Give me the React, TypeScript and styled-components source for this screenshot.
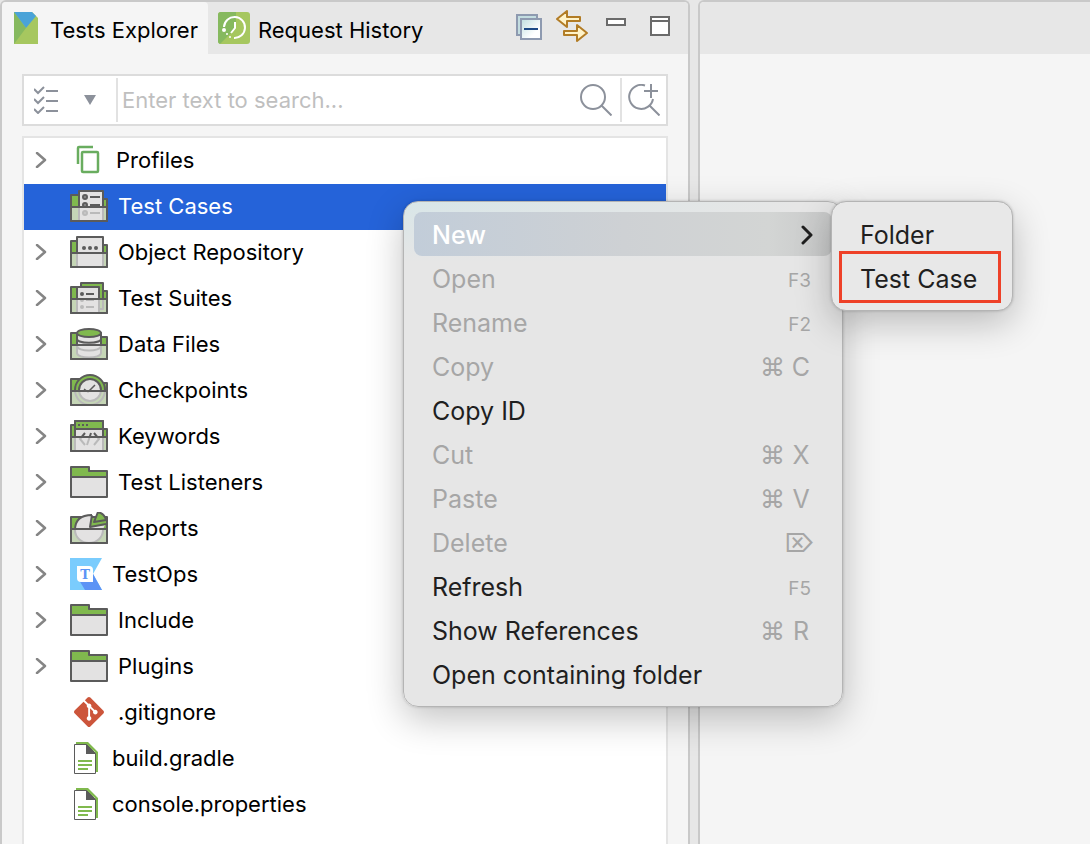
import React from "react";
import styled, { createGlobalStyle, css } from "styled-components";
import { SiGit } from "react-icons/si";

const GlobalStyle = createGlobalStyle`
  * { box-sizing: border-box; }
  body {
    margin: 0;
    background: #e7e7e7;
    color: #000;
    font-family: Inter, "Liberation Sans", sans-serif;
    font-size: 22px;
    line-height: 28px;
  }
  button, input {
    font: inherit;
    color: inherit;
    border: 0;
    padding: 0;
    background: none;
  }
  svg { display: block; flex: none; }
`;

const Workbench = styled.main`
  position: relative;
  display: grid;
  grid-template-columns: minmax(0, 690fr) minmax(0, 392fr);
  gap: 8px;
  height: 100vh;
  overflow: hidden;
`;

const Pane = styled.section<{ $open?: boolean }>`
  display: flex;
  flex-direction: column;
  min-width: 0;
  min-height: 0;
  border: 2px solid #c9c9c9;
  border-bottom: 0;
  border-right-width: ${(p) => (p.$open ? 0 : 2)}px;
  border-radius: 6px ${(p) => (p.$open ? 0 : 6)}px 0 0;
  background: #f5f5f5;
  overflow: hidden;
`;

const TabBar = styled.header`
  display: flex;
  flex: none;
  height: 52px;
  background: #e7e7e7;
`;

const Tabs = styled.div`
  display: flex;
  flex: 1;
`;

const Tab = styled.button<{ $active?: boolean }>`
  display: flex;
  align-items: center;
  gap: ${(p) => (p.$active ? 12 : 8)}px;
  padding: 0 10px 0 ${(p) => (p.$active ? 12 : 10)}px;
  background: ${(p) => (p.$active ? "#f5f5f5" : "transparent")};
  border-radius: 0 4px 0 0;
  white-space: nowrap;
`;

const TabLabel = styled.span`
  padding-top: 4px;
`;

const TabTools = styled.div`
  display: flex;
  align-items: flex-start;
  gap: 14px;
  padding: 8px 16px 0 0;
`;

const ToolButton = styled.button`
  display: flex;
`;

const SearchBar = styled.form`
  display: flex;
  flex: none;
  height: 52px;
  margin: 20px 20px 10px;
  padding: 2px 0;
  border: 2px solid #dcdcdc;
  background: #fff;
`;

const FilterButton = styled.button`
  display: flex;
  align-items: center;
  gap: 26px;
  padding: 0 20px 0 10px;
  border-right: 2px solid #e2e2e2;
`;

const SearchInput = styled.input`
  flex: 1;
  min-width: 0;
  padding-left: 4px;
  outline: 0;
  &::placeholder { color: #bfbfbf; opacity: 1; }
`;

const SearchButton = styled.button<{ $divided?: boolean }>`
  display: flex;
  align-items: center;
  padding: 0 ${(p) => (p.$divided ? 6 : 8)}px;
  ${(p) => p.$divided && css`border-left: 2px solid #e2e2e2;`}
`;

const Tree = styled.ul`
  flex: 1;
  min-height: 0;
  margin: 0 20px;
  padding: 0;
  list-style: none;
  background: #fff;
  border: 2px solid #e4e4e4;
  border-bottom: 0;
  overflow: hidden;
`;

const TreeRow = styled.li<{ $selected?: boolean }>`
  display: flex;
  align-items: center;
  gap: 10px;
  height: 46px;
  padding: 0 10px 2px;
  white-space: nowrap;
  ${(p) => p.$selected && css`
    background: #2563d9;
    color: #fff;
  `}
`;

const Twisty = styled.button`
  width: 26px;
  height: 32px;
  padding: 8px 0 8px 1px;
`;

const TwistySpace = styled.span`
  width: 26px;
`;

const menuSurface = css`
  position: absolute;
  padding: 10px;
  border: 1px solid #b4b4b4;
  border-radius: 15px;
  font-size: 25px;
  line-height: 32px;
  color: #1f1f1f;
  box-shadow: 0 12px 36px rgba(0, 0, 0, 0.24), 0 0 3px rgba(0, 0, 0, 0.2);
`;

const ContextMenu = styled.div`
  ${menuSurface}
  left: 403px;
  top: 201px;
  width: 440px;
  background:
    linear-gradient(90deg, rgba(230, 230, 230, 0), #e6e6e6 90%),
    linear-gradient(#d8e6e8, #e6e6e6 60px);
`;

const SubMenu = styled.div`
  ${menuSurface}
  left: 831px;
  top: 201px;
  width: 182px;
  background: #e8e8e8;
`;

const MenuItem = styled.button<{ $highlighted?: boolean }>`
  position: relative;
  display: flex;
  align-items: center;
  justify-content: space-between;
  width: 100%;
  height: 44px;
  padding: 2px 21px 0 18px;
  border-radius: 8px;
  text-align: left;
  white-space: nowrap;
  &:disabled { color: #a6a6a6; }
  ${(p) => p.$highlighted && css`
    padding-right: 16px;
    color: #fff;
    font-weight: 500;
    background: linear-gradient(90deg, #c2cdd9, #ced1d4 50%, #d3d5d4 85%, #c8c9c9);
  `}
`;

const Callout = styled.span`
  position: absolute;
  inset: -5px 1px -3px -3px;
  border: 3px solid #ee4128;
`;

const Shortcut = styled.span`
  display: flex;
  gap: 11px;
  color: #a6a6a6;
`;

const FunctionKey = styled.span`
  font-size: 19px;
  color: #a6a6a6;
  padding-top: 4px;
`;

const DeleteKey = styled.span`
  margin-right: -4px;
  color: #a6a6a6;
`;

const Key = styled.span`
  width: 20px;
  text-align: center;
`;

const Green = "#80b94e";
const Ink = "#5b5b5b";
const Paper = "#e3e2e2";

function Front({ top = 16 }: { top?: number }) {
  return (
    <>
      <path d={`M1 ${top + 1}h36v${30 - top}H1z`} fill={Paper} fillOpacity={0.7} />
      <path d={`M1 ${top + 1}h36v${30 - top}H1z`} fill="none" stroke={Ink} strokeWidth={2} strokeLinejoin="round" />
    </>
  );
}

function FolderIcon({ children, top }: { children: React.ReactNode; top?: number }) {
  return (
    <svg width="38" height="32" viewBox="0 0 38 32" aria-hidden>
      <path d="M1 31V5h18v4h18v22z" fill={Green} stroke={Ink} strokeWidth={2} strokeLinejoin="round" />
      {children}
      <Front top={top} />
    </svg>
  );
}

const outline = { stroke: Ink, strokeWidth: 2, strokeLinejoin: "round" as const };

const PlainFolder = () => (
  <svg width="38" height="32" viewBox="0 0 38 32" aria-hidden>
    <path d="M1 11V1h18v4h18v6z" fill={Green} {...outline} />
    <path d="M1 11h36v20H1z" fill={Paper} {...outline} />
  </svg>
);

const CasesIcon = () => (
  <FolderIcon>
    <path d="M9 31V1h24v30z" fill={Paper} {...outline} />
    <path d="M20 7h10M20 15h10M20 23h10" stroke={Ink} strokeWidth={2} />
    <g fill="#8d8d8d" stroke={Ink} strokeWidth={2}>
      <circle cx="15" cy="7" r="2" />
      <circle cx="15" cy="15" r="2" />
      <circle cx="15" cy="23" r="2" />
    </g>
  </FolderIcon>
);

const ObjectIcon = () => (
  <FolderIcon>
    <path d="M7 31V1h26v30z" fill={Paper} {...outline} />
    <g fill={Ink}>
      <circle cx="14" cy="12" r="2" />
      <circle cx="20" cy="12" r="2" />
      <circle cx="26" cy="12" r="2" />
    </g>
  </FolderIcon>
);

const SuitesIcon = () => (
  <FolderIcon>
    <path d="M11 27V1h22v26z" fill={Green} {...outline} />
    <path d="M7 31V5h22v26z" fill={Paper} {...outline} />
    <path d="M16 12h8M16 18h8M16 25h8" stroke={Ink} strokeWidth={2} />
    <g fill={Ink}>
      <circle cx="12" cy="12" r="2" />
      <circle cx="12" cy="18" r="2" />
      <circle cx="12" cy="25" r="2" />
    </g>
  </FolderIcon>
);

const DataIcon = () => (
  <FolderIcon>
    <path d="M7 5v20c0 6 24 6 24 0V5z" fill={Paper} {...outline} />
    <path d="M7 11c0 5 24 5 24 0M7 18c0 6 24 6 24 0" fill="none" {...outline} />
    <ellipse cx="19" cy="5" rx="12" ry="4" fill={Green} {...outline} />
  </FolderIcon>
);

const CheckpointIcon = () => (
  <FolderIcon>
    <circle cx="20" cy="16" r="15" fill={Green} {...outline} />
    <circle cx="20" cy="16" r="11" fill={Paper} {...outline} />
    <path d="M14 15l4 3 7-7" fill="none" stroke={Ink} strokeWidth={1.5} />
  </FolderIcon>
);

const KeywordIcon = () => (
  <FolderIcon>
    <path d="M5 31V1h28v30z" fill={Paper} {...outline} />
    <path d="M5 9V1h28v8z" fill={Green} {...outline} />
    <path d="M8 5h2M12 5h2M16 5h2" stroke={Ink} strokeWidth={2} />
    <path d="M15 13l-5 6 5 6M24 13l5 6-5 6M21 13l-4 12" fill="none" stroke={Ink} strokeWidth={2} />
  </FolderIcon>
);

const ReportIcon = () => (
  <svg width="38" height="32" viewBox="0 0 38 32" aria-hidden>
    <path d="M1 31V5h36v26z" fill={Green} {...outline} />
    <path d="M19 0h19v4H19z" fill="#fff" />
    <path d="M22 3A14 14 0 1 0 33 17l2-4-15 2z" fill={Paper} />
    <path d="M5 18a14 13 0 0 0 28 0z" fill={Paper} />
    <path d="M22 3C10 3 5 9 5 18a14 13 0 0 0 28 0M22 3l-2 12 16-3" fill="none" {...outline} />
    <path d="M28 0l-4 10 12-2c-1-4-4-7-8-8z" fill={Green} {...outline} />
    <Front />
  </svg>
);

const ProfilesIcon = () => (
  <svg width="36" height="32" viewBox="0 0 36 32" fill="none" stroke="#69ad5f" strokeWidth={2.5} aria-hidden>
    <path d="M8 20V4a1 1 0 0 1 1-1h14" />
    <rect x="12" y="8" width="16" height="20" rx="1" />
  </svg>
);

const TestOpsIcon = () => (
  <svg width="32" height="32" viewBox="0 0 32 32" aria-hidden>
    <path d="M0 0h32L23 16l9 16H0z" fill="#7accfd" />
    <path d="M9 22l13-8 10 18H15z" fill="#5c93f5" />
    <path d="M7 8h12a4 4 0 0 1 4 4v12H11a4 4 0 0 1-4-4z" fill="#fff" />
    <text x="15" y="21" textAnchor="middle" fontFamily="DejaVu Serif, serif" fontWeight="700" fontSize="13" fill="#5c93f5">T</text>
  </svg>
);

const GitIcon = () => (
  <svg width="38" height="32" viewBox="0 0 38 32" aria-hidden>
    <SiGit size={30} x={4} y={1} color="#cc553b" />
  </svg>
);

const FileIcon = () => (
  <svg width="32" height="32" viewBox="0 0 32 32" aria-hidden>
    <path d="M6 0h12l10 10v20h-3V10L15 2H6z" fill={Green} />
    <path d="M4.500 2.500h12l9 9v20h-21z" fill="#fff" stroke={Ink} />
    <path d="M16 2l10 10H16z" fill={Ink} />
    <path d="M8 19h14M8 23h14M8 27h10" stroke={Green} strokeWidth={2} />
  </svg>
);

const ExplorerLogo = () => (
  <svg width="24" height="32" viewBox="0 0 24 32" aria-hidden>
    <path d="M0 0h18l6 6v26H0z" fill="#a6c75f" />
    <path d="M0 0l12 16L0 32z" fill="#86b95f" />
    <path d="M0 0h18l4 4-10 12z" fill="#4aa3d8" />
  </svg>
);

const HistoryLogo = () => (
  <svg width="32" height="32" viewBox="0 0 32 32" fill="none" aria-hidden>
    <rect width="32" height="32" rx="3" fill="#a6c75f" />
    <path d="M3 0h15v16L2 32a3 3 0 0 1-2-3V3a3 3 0 0 1 3-3z" fill="#86b95f" />
    <path d="M6 15A10.500 10.500 0 1 1 16 26" stroke="#fff" strokeWidth={2} />
    <path d="M17 10v6l-4 5" stroke="#fff" strokeWidth={2} />
    <g fill="#fff">
      <circle cx="6" cy="18" r="2" />
      <circle cx="9" cy="22" r="1" />
      <circle cx="12" cy="25" r="1" />
    </g>
  </svg>
);

const CollapseIcon = () => (
  <svg width="26" height="32" viewBox="0 0 26 32" aria-hidden>
    <defs>
      <linearGradient id="sheet" x1="0" y1="0" x2="1" y2="1">
        <stop offset="0" stopColor="#bfdfe0" />
        <stop offset="0.700" stopColor="#fff" />
      </linearGradient>
    </defs>
    <path d="M1 5h20v20H1z" fill="#c3dde0" stroke="#8e9ab0" strokeWidth={2} />
    <path d="M5 9h20v20H5z" fill="url(#sheet)" stroke="#8e9ab0" strokeWidth={2} />
    <path d="M8 19h14" stroke="#1d4a85" strokeWidth={2} />
  </svg>
);

const LinkIcon = () => (
  <svg width="32" height="32" viewBox="0 0 32 32" fill="#fff3c9" stroke="#b27c25" strokeWidth={2} strokeLinejoin="round" aria-hidden>
    <path d="M1 9l10-8v6h13v4H11v6z" />
    <path d="M31 23l-10-8v6H8v4h13v6z" />
  </svg>
);

const MinimizeIcon = () => (
  <svg width="28" height="32" viewBox="0 0 28 32" aria-hidden>
    <path d="M5 9h18v6H5z" fill="#fff" stroke="#6b6b6b" strokeWidth={2} />
  </svg>
);

const MaximizeIcon = () => (
  <svg width="28" height="32" viewBox="0 0 28 32" aria-hidden>
    <path d="M7 7h18v18H7zM7 11h18" fill="#fff" stroke="#6b6b6b" strokeWidth={2} />
  </svg>
);

const ChecklistIcon = () => (
  <svg width="24" height="28" viewBox="0 0 24 28" fill="none" stroke="#8c919b" strokeWidth={2} aria-hidden>
    <path d="M0 3l4 4 6-6M0 13l4 4 6-6M0 23l4 4 6-6" />
    <path d="M12 5h12M12 15h12M12 25h12" />
  </svg>
);

const CaretIcon = () => (
  <svg width="12" height="10" viewBox="0 0 12 10" aria-hidden>
    <path d="M0 0h12L6 10z" fill="#8c919b" />
  </svg>
);

const MagnifierIcon = ({ plus }: { plus?: boolean }) => (
  <svg width="32" height="32" viewBox="0 0 32 32" fill="none" stroke="#8c919b" strokeWidth={2} aria-hidden>
    {plus ? (
      <path d="M17 1.500A12 12 0 1 0 25 15M22 22l9.500 9.500M16 7h14M23 0v14" />
    ) : (
      <path d="M13 1a12 12 0 1 0 0 24a12 12 0 1 0 0-24M22 22l9.500 9.500" />
    )}
  </svg>
);

const TwistyIcon = () => (
  <svg width="12" height="16" viewBox="0 0 12 16" fill="none" stroke="#858585" strokeWidth={2.5} strokeLinecap="round" strokeLinejoin="round" aria-hidden>
    <path d="M2 1l8 7-8 7" />
  </svg>
);

const SubmenuArrow = () => (
  <svg width="18" height="20" viewBox="0 0 18 20" fill="none" stroke="#1f1f1f" strokeWidth={3} strokeLinecap="round" strokeLinejoin="round" aria-hidden>
    <path d="M5 2l8 8-8 8" />
  </svg>
);

const nodes = [
  { label: "Profiles", Icon: ProfilesIcon, branch: true },
  { label: "Test Cases", Icon: CasesIcon, selected: true },
  { label: "Object Repository", Icon: ObjectIcon, branch: true },
  { label: "Test Suites", Icon: SuitesIcon, branch: true },
  { label: "Data Files", Icon: DataIcon, branch: true },
  { label: "Checkpoints", Icon: CheckpointIcon, branch: true },
  { label: "Keywords", Icon: KeywordIcon, branch: true },
  { label: "Test Listeners", Icon: PlainFolder, branch: true },
  { label: "Reports", Icon: ReportIcon, branch: true },
  { label: "TestOps", Icon: TestOpsIcon, branch: true },
  { label: "Include", Icon: PlainFolder, branch: true },
  { label: "Plugins", Icon: PlainFolder, branch: true },
  { label: ".gitignore", Icon: GitIcon },
  { label: "build.gradle", Icon: FileIcon },
  { label: "console.properties", Icon: FileIcon },
];

const commands: { label: string; fn?: string; cmd?: string; del?: boolean; enabled?: boolean }[] = [
  { label: "Open", fn: "F3" },
  { label: "Rename", fn: "F2" },
  { label: "Copy", cmd: "C" },
  { label: "Copy ID", enabled: true },
  { label: "Cut", cmd: "X" },
  { label: "Paste", cmd: "V" },
  { label: "Delete", del: true },
  { label: "Refresh", fn: "F5", enabled: true },
  { label: "Show References", cmd: "R", enabled: true },
  { label: "Open containing folder", enabled: true },
];

export default function App() {
  return (
    <>
      <GlobalStyle />
      <Workbench>
        <Pane>
          <TabBar>
            <Tabs role="tablist">
              <Tab role="tab" aria-selected $active>
                <ExplorerLogo />
                <TabLabel>Tests Explorer</TabLabel>
              </Tab>
              <Tab role="tab" aria-selected={false}>
                <HistoryLogo />
                <TabLabel>Request History</TabLabel>
              </Tab>
            </Tabs>
            <TabTools>
              <ToolButton aria-label="Collapse all"><CollapseIcon /></ToolButton>
              <ToolButton aria-label="Link with editor"><LinkIcon /></ToolButton>
              <ToolButton aria-label="Minimize"><MinimizeIcon /></ToolButton>
              <ToolButton aria-label="Maximize"><MaximizeIcon /></ToolButton>
            </TabTools>
          </TabBar>
          <SearchBar onSubmit={(e) => e.preventDefault()}>
            <FilterButton type="button" aria-label="Filter">
              <ChecklistIcon />
              <CaretIcon />
            </FilterButton>
            <SearchInput aria-label="Search" placeholder="Enter text to search..." />
            <SearchButton type="submit" aria-label="Search"><MagnifierIcon /></SearchButton>
            <SearchButton type="button" aria-label="Advanced search" $divided><MagnifierIcon plus /></SearchButton>
          </SearchBar>
          <Tree role="tree">
            {nodes.map(({ label, Icon, branch, selected }) => (
              <TreeRow key={label} role="treeitem" aria-selected={!!selected} $selected={selected}>
                {branch ? <Twisty aria-label={`Expand ${label}`}><TwistyIcon /></Twisty> : <TwistySpace />}
                <Icon />
                <span>{label}</span>
              </TreeRow>
            ))}
          </Tree>
        </Pane>
        <Pane $open>
          <TabBar />
        </Pane>

        <ContextMenu role="menu">
          <MenuItem role="menuitem" aria-haspopup="menu" aria-expanded $highlighted>
            New
            <SubmenuArrow />
          </MenuItem>
          {commands.map(({ label, fn, cmd, del, enabled }) => (
            <MenuItem key={label} role="menuitem" disabled={!enabled}>
              {label}
              {fn && <FunctionKey>{fn}</FunctionKey>}
              {cmd && <Shortcut><Key>⌘</Key><Key>{cmd}</Key></Shortcut>}
              {del && <DeleteKey>⌦</DeleteKey>}
            </MenuItem>
          ))}
        </ContextMenu>
        <SubMenu role="menu">
          <MenuItem role="menuitem">Folder</MenuItem>
          <MenuItem role="menuitem">
            Test Case
            <Callout />
          </MenuItem>
        </SubMenu>
      </Workbench>
    </>
  );
}
